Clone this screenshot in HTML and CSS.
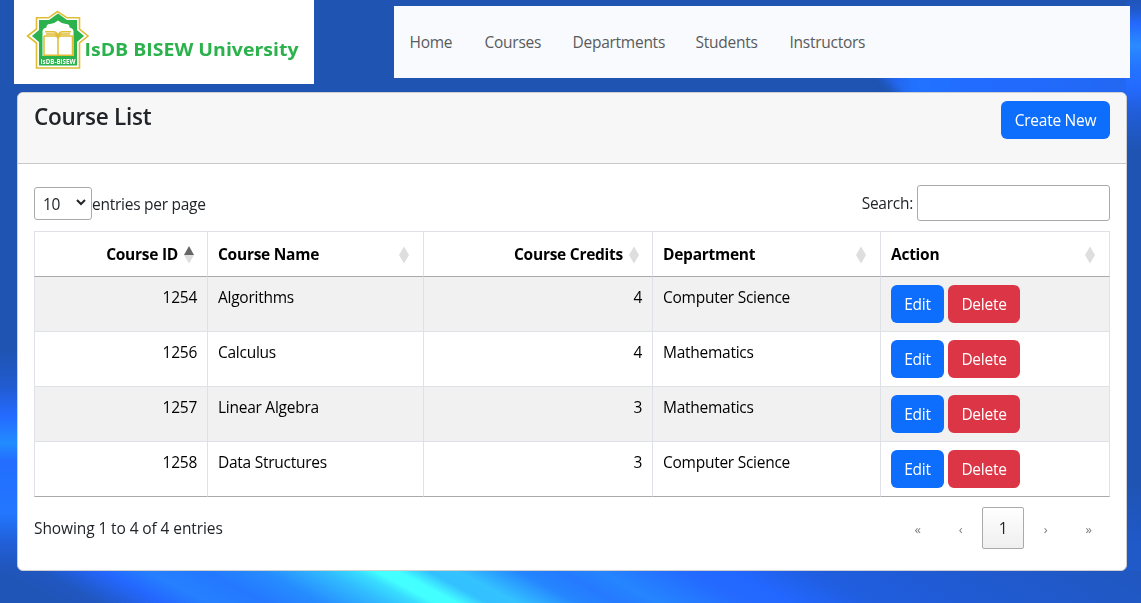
FILE: index.html
```
<!DOCTYPE html>
<html lang="en">
<head>
<meta charset="utf-8">
<title>Course List</title>
<link rel="stylesheet" href="styles.css">
</head>
<body>
<svg class="backdrop" viewBox="0 0 1141 603" preserveAspectRatio="none" aria-hidden="true">
  <defs>
    <linearGradient id="left" x1="0" y1="0" x2="0" y2="603" gradientUnits="userSpaceOnUse">
      <stop offset="0" stop-color="#1f54b2"/><stop offset=".58" stop-color="#1f54b2"/>
      <stop offset=".64" stop-color="#215bd0"/><stop offset=".69" stop-color="#246aff"/>
      <stop offset=".735" stop-color="#228cff"/><stop offset=".765" stop-color="#236dff"/>
      <stop offset=".85" stop-color="#2277ff"/><stop offset=".9" stop-color="#215fd8"/>
      <stop offset=".94" stop-color="#2057be"/><stop offset="1" stop-color="#2054b5"/>
    </linearGradient>
    <linearGradient id="right" x1="0" y1="0" x2="0" y2="603" gradientUnits="userSpaceOnUse">
      <stop offset="0" stop-color="#2055b8"/><stop offset=".015" stop-color="#2159c8"/>
      <stop offset=".04" stop-color="#246aff"/><stop offset=".075" stop-color="#2a8bff"/>
      <stop offset=".11" stop-color="#2475ff"/><stop offset=".145" stop-color="#236aff"/>
      <stop offset=".18" stop-color="#215fdd"/><stop offset=".25" stop-color="#1f54b2"/>
      <stop offset=".8" stop-color="#1f54b2"/><stop offset=".9" stop-color="#2059c8"/><stop offset="1" stop-color="#2059c8"/>
    </linearGradient>
    <linearGradient id="upper" x1="840" y1="0" x2="1141" y2="0" gradientUnits="userSpaceOnUse">
      <stop offset="0" stop-color="#1f54b2"/><stop offset=".16" stop-color="#2262e8"/>
      <stop offset=".25" stop-color="#2472ff"/><stop offset=".45" stop-color="#246cff"/>
      <stop offset=".8" stop-color="#2369f8"/><stop offset="1" stop-color="#2266ee"/>
    </linearGradient>
    <linearGradient id="lower" x1="0" y1="0" x2="1141" y2="0" gradientUnits="userSpaceOnUse">
      <stop offset="0" stop-color="#2055b8"/><stop offset=".035" stop-color="#2057c0"/>
      <stop offset=".09" stop-color="#2467ff"/><stop offset=".13" stop-color="#2580ff"/>
      <stop offset=".18" stop-color="#2478ff"/><stop offset=".23" stop-color="#268cff"/>
      <stop offset=".285" stop-color="#31bdff"/><stop offset=".312" stop-color="#38dcff"/>
      <stop offset=".329" stop-color="#43ffff"/><stop offset=".348" stop-color="#43ffff"/>
      <stop offset=".375" stop-color="#33c0ff"/><stop offset=".4" stop-color="#34c3ff"/>
      <stop offset=".455" stop-color="#2585ff"/><stop offset=".49" stop-color="#257aff"/>
      <stop offset=".525" stop-color="#2585ff"/><stop offset=".6" stop-color="#246aff"/>
      <stop offset=".64" stop-color="#2267ff"/><stop offset=".71" stop-color="#205ee0"/>
      <stop offset=".84" stop-color="#205ad0"/><stop offset="1" stop-color="#2057bf"/>
    </linearGradient>
    <filter id="soft" x="-10%" y="-50%" width="120%" height="200%"><feGaussianBlur stdDeviation="4"/></filter>
  </defs>
  <rect width="1141" height="603" fill="#1f54b2"/>
  <rect width="30" height="603" fill="url(#left)"/>
  <path d="M875 70L1160 70V100H905Z" fill="url(#upper)" filter="url(#soft)"/>
  <rect x="1126" width="15" height="603" fill="url(#right)"/>
  <g transform="translate(0 571) skewX(62)"><rect x="-70" width="1260" height="34" fill="url(#lower)"/></g>
</svg>
<header class="top">
  <a class="brand">
    <svg width="300" height="84" viewBox="0 0 300 84">
      <g fill="none" stroke="#dfbd35" stroke-width="1.6">
        <path d="M22.5 17.800H34.500L43.500 11.500L53 17.800H65.500V29L74 36L65.500 43V68H22.500V43L13.500 36L22.500 29Z"/>
      </g>
      <path d="M25 20H35L44 13.500L53 20H63V30L70 36L63 42V65.500H25V42L18 36L25 30Z" fill="#2bb24c"/>
      <path d="M28.500 56V31Q29 28 32.500 27.500Q32 24 36 24Q40 24 44 20.500Q48 24 52 24Q56 24 55.500 27.500Q59 28 59.500 31V56Z" fill="#fff"/>
      <g fill="none" stroke="#dfbd35" stroke-width="1.500">
        <path d="M30 36V55.300H58.500V36H46Q44 37 44 39V55M44 39Q44 36 41 36H30M44 36Q43 31.500 39 31.700H31M32 34H40Q43 34 44 37M44 36Q45 31.500 49 31.700H57M56 34H48Q45 34 44 37"/>
      </g>
      <text class="seal" x="26.500" y="64" textLength="35" lengthAdjust="spacingAndGlyphs">IsDB-BISEW</text>
      <text class="wordmark" x="70.500" y="56" textLength="214" lengthAdjust="spacingAndGlyphs">IsDB BISEW University</text>
    </svg>
  </a>
  <nav class="nav">
    <a class="home">Home</a><a class="courses">Courses</a><a class="departments">Departments</a><a class="students">Students</a><a>Instructors</a>
  </nav>
</header>
<main class="card">
  <div class="card-header"><h1>Course List</h1><button class="btn create">Create New</button></div>
  <div class="card-body">
    <div class="controls">
      <label class="length"><span class="select">10<svg width="10" height="7" viewBox="0 0 10 7"><path d="M1 1L5 5L9 1" fill="none" stroke="#212529" stroke-width="2"/></svg></span>entries per page</label>
      <label class="search">Search:<input type="text"></label>
    </div>
    <table>
      <colgroup><col class="c1"><col class="c2"><col class="c3"><col class="c4"><col class="c5"></colgroup>
      <thead><tr>
        <th><div class="head num">Course ID<svg class="sort" viewBox="0 0 10 18"><path d="M0 9L5 0L10 9Z" fill="#666"/><path d="M0 9L5 17.500L10 9Z" fill="#dedede"/></svg></div></th>
        <th><div class="head">Course Name<svg class="sort" viewBox="0 0 10 18"><path d="M0 9L5 .5L10 9L5 17.500Z" fill="#dedede"/></svg></div></th>
        <th><div class="head num">Course Credits<svg class="sort" viewBox="0 0 10 18"><path d="M0 9L5 .5L10 9L5 17.500Z" fill="#dedede"/></svg></div></th>
        <th><div class="head">Department<svg class="sort" viewBox="0 0 10 18"><path d="M0 9L5 .5L10 9L5 17.500Z" fill="#dedede"/></svg></div></th>
        <th><div class="head">Action<svg class="sort" viewBox="0 0 10 18"><path d="M0 9L5 .5L10 9L5 17.500Z" fill="#dedede"/></svg></div></th>
      </tr></thead>
      <tbody>
        <tr><td class="right">1254</td><td>Algorithms</td><td class="right">4</td><td>Computer Science</td><td><div class="actions"><button class="btn edit">Edit</button><button class="btn delete">Delete</button></div></td></tr>
        <tr><td class="right">1256</td><td>Calculus</td><td class="right">4</td><td>Mathematics</td><td><div class="actions"><button class="btn edit">Edit</button><button class="btn delete">Delete</button></div></td></tr>
        <tr><td class="right">1257</td><td>Linear Algebra</td><td class="right">3</td><td>Mathematics</td><td><div class="actions"><button class="btn edit">Edit</button><button class="btn delete">Delete</button></div></td></tr>
        <tr><td class="right">1258</td><td>Data Structures</td><td class="right">3</td><td>Computer Science</td><td><div class="actions"><button class="btn edit">Edit</button><button class="btn delete">Delete</button></div></td></tr>
      </tbody>
    </table>
    <div class="footer">
      <span class="info">Showing 1 to 4 of 4 entries</span>
      <div class="pages"><span>«</span><span>‹</span><span class="current">1</span><span>›</span><span>»</span></div>
    </div>
  </div>
</main>
</body>
</html>
```
FILE: styles.css
```
* { box-sizing: border-box; }
body {
  margin: 0;
  height: 603px;
  overflow: hidden;
  background: #1f54b2;
  color: #212529;
  font: 15.5px/24px "Open Sans", "Noto Sans", sans-serif;
  letter-spacing: -.26px;
}
.backdrop { position: fixed; inset: 0; width: 100%; height: 100%; z-index: -1; }
.top { display: flex; height: 92px; padding: 0 11px 0 14px; gap: 80px; }
.brand { width: 300px; height: 84px; background: #fff; letter-spacing: 0; }
.brand svg { display: block; }
.seal { font: 700 6.500px "Open Sans", sans-serif; fill: #fff; }
.wordmark { font: 700 17px "Open Sans", sans-serif; fill: #2bb24c; }
.nav {
  flex: 1;
  display: flex;
  align-items: center;
  height: 72px;
  margin-top: 6px;
  padding: 0 15.5px;
  background: #f8fafd;
  color: #595a5c;
}
.nav a { flex: none; white-space: nowrap; }
.home { width: 75px; }
.courses { width: 88px; }
.departments { width: 123px; }
.students { width: 94px; }
.card {
  width: 1110px;
  height: 479px;
  margin-left: 17px;
  border: 1px solid #cfcfcf;
  border-radius: 6px;
  background: #fff;
  overflow: hidden;
}
.card-header {
  display: flex;
  justify-content: space-between;
  align-items: flex-start;
  height: 71px;
  padding: 8px 16px;
  background: #f7f7f7;
  border-bottom: 1px solid #c9c9c9;
}
h1 { margin: 1px 0 0; font-size: 22.500px; line-height: 29px; font-weight: 600; letter-spacing: -.25px; }
.btn {
  height: 38px;
  padding: 0;
  border: 0;
  border-radius: 6px;
  color: #fff;
  background: #0d6efd;
  font: inherit;
  letter-spacing: inherit;
}
.create { width: 109px; }
.edit { width: 53px; }
.delete { width: 72px; background: #dc3545; }
.card-body { padding: 21px 16px 0; }
.controls { display: flex; justify-content: space-between; height: 46px; }
.length { display: flex; align-items: center; height: 36px; padding-top: 1px; }
.select {
  display: flex;
  align-items: center;
  justify-content: space-between;
  width: 58px;
  height: 33px;
  padding: 1px 5px 0 8px;
  border: 1px solid #aaa;
  border-radius: 3px;
}
.select svg { margin-top: -3px; }
.search { display: flex; align-items: center; gap: 4px; height: 36px; }
.search input { width: 193px; height: 36px; border: 1px solid #aaa; border-radius: 3px; background: #fff; }
table { width: 1076px; table-layout: fixed; border-collapse: separate; border-spacing: 0; color: #000; }
.c1 { width: 173px; }
.c2 { width: 216px; }
.c3 { width: 229px; }
.c4 { width: 228px; }
.c5 { width: 230px; }
th, td { padding: 0 10px; border: 0 solid #dee2e6; border-width: 1px 0 0 1px; text-align: left; }
th:last-child, td:last-child { border-right-width: 1px; }
th { height: 45px; }
td { height: 55px; padding-top: 8px; vertical-align: top; }
tbody tr:first-child td { border-top-color: #aaa; }
tbody tr:last-child td { height: 56px; border-bottom: 1px solid #aaa; }
tbody tr:nth-child(odd) { background: #f1f1f1; }
.right { text-align: right; }
.head { display: flex; align-items: center; justify-content: space-between; padding-right: 4px; white-space: nowrap; }
.num { justify-content: flex-end; gap: 6px; padding-right: 3px; }
.sort { width: 10px; height: 18px; margin-top: 2px; }
.actions { display: flex; gap: 4px; }
.footer { display: flex; justify-content: space-between; align-items: center; height: 42px; margin-top: 10px; }
.info { letter-spacing: -.1px; }
.pages { display: flex; }
.pages span { display: flex; align-items: center; justify-content: center; width: 43px; height: 42px; padding-top: 2px; color: #7c7c7c; font-size: 13px; }
.pages .current { width: 42px; padding-top: 0; border: 1px solid #aaa; border-radius: 2px; background: linear-gradient(#fff, #efefef); color: #212529; font-size: 15.5px; }
```
